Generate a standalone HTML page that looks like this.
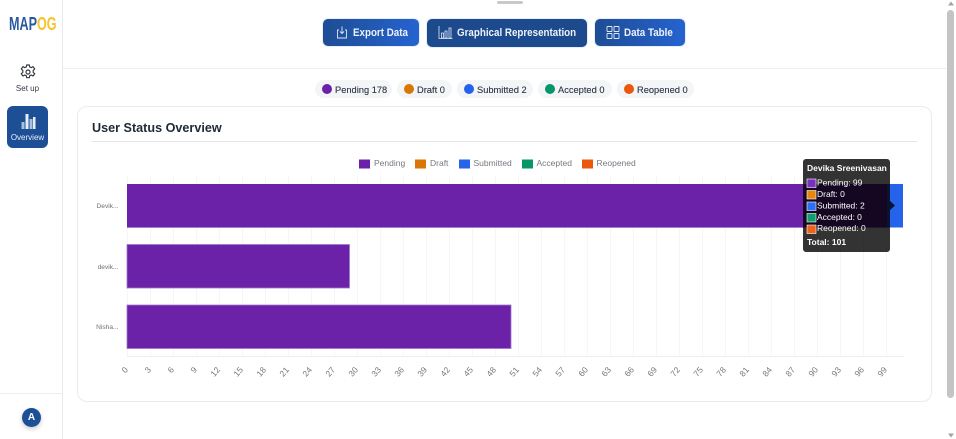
<!DOCTYPE html>
<html>
<head>
<meta charset="utf-8">
<style>
html,body{margin:0;padding:0;width:956px;height:439px;overflow:hidden;background:#fff;font-family:"Liberation Sans",sans-serif;color:#1f2430}
#root{position:absolute;left:0;top:0;width:956px;height:439px;filter:blur(.3px)}
.a{position:absolute}
.btn{position:absolute;top:19px;height:27px;border-radius:5px;color:#eef3fb;font-size:11px;font-weight:bold;line-height:27px;background:linear-gradient(90deg,#1e4d94,#2563d0);box-shadow:0 0 0 1px #e6eefa}
.btn span{position:absolute;top:1px;white-space:nowrap;transform:scaleX(.89);transform-origin:0 0}
.btn svg{position:absolute;top:6px}
.pill{position:absolute;top:80px;height:18px;border-radius:9px;background:#f4f5f6;font-size:9.3px;line-height:18px;color:#374151;white-space:nowrap}
.pill i{position:absolute;left:7px;top:4px;width:10px;height:10px;border-radius:50%}
.pill span{position:absolute;top:.5px;text-shadow:0 0 .3px #374151}
</style>
</head>
<body>
<div id="root">
<!-- sidebar -->
<div class="a" style="left:62px;top:0;width:1px;height:439px;background:#e8eaed"></div>
<div class="a" style="left:0;top:393px;width:62px;height:1px;background:#eceef0"></div>
<div class="a" style="left:9px;top:14px;font-size:18px;line-height:20px;font-weight:bold;transform:scaleX(.7);transform-origin:0 0;white-space:nowrap;width:80px"><span style="color:#2b5a9c">MAP</span><span style="color:#f6c52c">OG</span></div>
<svg class="a" style="left:20px;top:64px" width="16" height="16" viewBox="0 0 24 24" fill="none" stroke="#30343c" stroke-width="1.7" stroke-linejoin="round"><circle cx="12" cy="12" r="3"/><path d="M10 1.500h4l.6 3 2.300 1 2.600-1.600 2.600 3.500-2.300 2v3.200l2.300 2-2.600 3.500-2.600-1.600-2.300 1-.6 3h-4l-.6-3-2.300-1-2.600 1.600-2.600-3.500 2.300-2v-3.200l-2.300-2 2.600-3.500 2.600 1.600 2.300-1z"/></svg>
<div class="a" style="left:0;top:83.500px;width:55px;text-align:center;font-size:8px;line-height:10px;color:#333a45">Set up</div>
<div class="a" style="left:7px;top:106px;width:41px;height:42px;border-radius:6px;background:#1c4f96"></div>
<svg class="a" style="left:21px;top:113px" width="15" height="16" viewBox="0 0 15 16"><g fill="#a9bfdc"><rect x="0.500" y="9" width="3" height="7"/><rect x="8.500" y="6" width="3" height="10"/></g><g fill="#e6edf6"><rect x="4.500" y="1" width="3" height="15"/><rect x="12" y="4" width="2.500" height="12"/></g></svg>
<div class="a" style="left:7px;top:132.500px;width:41px;text-align:center;font-size:8px;line-height:10px;color:#e8eef7">Overview</div>
<div class="a" style="left:22px;top:408px;width:19px;height:19px;border-radius:50%;background:#1c4f96;box-shadow:0 2px 5px rgba(0,0,0,.22);color:#fff;font-size:10px;line-height:20px;text-align:center;font-weight:bold">A</div>

<!-- top -->
<div class="a" style="left:497px;top:1px;width:26px;height:3px;border-radius:2px;background:#c8c9cb"></div>
<div class="btn" style="left:323px;width:96px"><svg style="left:12px" width="14" height="15" viewBox="0 0 14 15" fill="none" stroke="#dfe8f5" stroke-width=".9"><path d="M4 5H2.500v8h9V5H10M7 1.500v7M5 6.500l2 2 2-2"/></svg><span style="left:30px">Export Data</span></div>
<div class="btn" style="left:427px;top:18.500px;height:28px;width:160px;background:#1c4a8c;line-height:28px"><svg style="left:11px" width="15" height="15" viewBox="0 0 15 15" fill="none" stroke="#dfe8f5" stroke-width=".8"><path d="M1 1v12.500h13.500M3.500 8h2v5h-2zM7 6h2v7H7zM11 3h2v10h-2z"/></svg><span style="left:30px;top:0">Graphical Representation</span></div>
<div class="btn" style="left:595px;width:90px"><svg style="left:11px" width="14" height="15" viewBox="0 0 14 15" fill="none" stroke="#dfe8f5" stroke-width=".9"><rect x="1" y="1.500" width="5" height="5" rx=".5"/><rect x="8" y="1.500" width="5" height="5" rx=".5"/><rect x="1" y="8.500" width="5" height="5" rx=".5"/><rect x="8" y="8.500" width="5" height="5" rx=".5"/></svg><span style="left:29px">Data Table</span></div>
<div class="a" style="left:63px;top:68px;width:883px;height:1px;background:#eceef0"></div>

<!-- pills -->
<div class="pill" style="left:315px;width:77px"><i style="background:#6b21a8"></i><span style="left:20px">Pending 178</span></div>
<div class="pill" style="left:397px;width:55px"><i style="background:#d97706"></i><span style="left:20px">Draft 0</span></div>
<div class="pill" style="left:457px;width:76px"><i style="background:#2563eb"></i><span style="left:20px">Submitted 2</span></div>
<div class="pill" style="left:538px;width:74px"><i style="background:#059669"></i><span style="left:20px">Accepted 0</span></div>
<div class="pill" style="left:617px;width:77px"><i style="background:#ea580c"></i><span style="left:20px">Reopened 0</span></div>

<!-- card -->
<div class="a" style="left:77px;top:106px;width:853px;height:294px;border:1px solid #e9ebee;border-radius:10px;background:#fff"></div>
<div class="a" style="left:92px;top:119px;font-size:13px;line-height:18px;font-weight:bold;color:#1f2937;transform:scaleX(.97);transform-origin:0 0;white-space:nowrap">User Status Overview</div>
<div class="a" style="left:92px;top:141px;width:825px;height:1px;background:#e3e5ea"></div>

<!-- chart -->
<svg class="a" style="left:0;top:0" width="956" height="439" viewBox="0 0 956 439" font-family="Liberation Sans, sans-serif">
<g stroke="#f6f6f7" stroke-width="1">
<path d="M127.500 175V356M150.500 175V356M173.500 175V356M196.500 175V356M219.500 175V356M242.500 175V356M265.500 175V356M288.500 175V356M311.500 175V356M334.500 175V356M357.500 175V356M380.500 175V356M403.500 175V356M426.500 175V356M449.500 175V356M472.500 175V356M495.500 175V356M518.500 175V356M541.500 175V356M564.500 175V356M587.500 175V356M610.500 175V356M633.500 175V356M656.500 175V356M679.500 175V356M702.500 175V356M725.500 175V356M748.500 175V356M771.500 175V356M794.500 175V356M817.500 175V356M840.500 175V356M863.500 175V356M886.500 175V356"/>
<path d="M127 356.500H904" stroke="#eeeef0"/>
</g>
<!-- legend -->
<g font-size="8.500" fill="#74787e">
<rect x="359" y="159.500" width="11" height="9" fill="#6b21a8"/><text x="374" y="166">Pending</text>
<rect x="415" y="159.500" width="11" height="9" fill="#d97706"/><text x="430" y="166">Draft</text>
<rect x="459" y="159.500" width="11" height="9" fill="#2563eb"/><text x="473.500" y="166">Submitted</text>
<rect x="522" y="159.500" width="11" height="9" fill="#059669"/><text x="536.500" y="166">Accepted</text>
<rect x="582" y="159.500" width="11" height="9" fill="#ea580c"/><text x="596.500" y="166">Reopened</text>
</g>
<!-- bars -->
<rect x="127" y="184" width="760" height="43.500" fill="#6b21a8"/>
<rect x="887" y="184" width="16" height="43.500" fill="#2563eb"/>
<rect x="127" y="244.500" width="222.500" height="43.500" fill="#6b21a8" stroke="#a27bc9" stroke-width=".8"/>
<rect x="127" y="305" width="384" height="43.500" fill="#6b21a8" stroke="#a27bc9" stroke-width=".8"/>
<g stroke="#a27bc9" stroke-width=".8"><path d="M127 227.500H887"/></g>
<!-- y labels -->
<g font-size="6.600" fill="#6b6f75" text-anchor="end">
<text x="118.500" y="208">Devik...</text>
<text x="118.500" y="269">devik...</text>
<text x="118.500" y="329">Nisha...</text>
</g>
<!-- x labels -->
<g font-size="8.500" fill="#75787e" text-anchor="end" transform="translate(.5,-2)">
<text transform="translate(128,372) rotate(-50)">0</text>
<text transform="translate(151,372) rotate(-50)">3</text>
<text transform="translate(174,372) rotate(-50)">6</text>
<text transform="translate(197,372) rotate(-50)">9</text>
<text transform="translate(220,372) rotate(-50)">12</text>
<text transform="translate(243,372) rotate(-50)">15</text>
<text transform="translate(266,372) rotate(-50)">18</text>
<text transform="translate(289,372) rotate(-50)">21</text>
<text transform="translate(312,372) rotate(-50)">24</text>
<text transform="translate(335,372) rotate(-50)">27</text>
<text transform="translate(358,372) rotate(-50)">30</text>
<text transform="translate(381,372) rotate(-50)">33</text>
<text transform="translate(404,372) rotate(-50)">36</text>
<text transform="translate(427,372) rotate(-50)">39</text>
<text transform="translate(450,372) rotate(-50)">42</text>
<text transform="translate(473,372) rotate(-50)">45</text>
<text transform="translate(496,372) rotate(-50)">48</text>
<text transform="translate(519,372) rotate(-50)">51</text>
<text transform="translate(542,372) rotate(-50)">54</text>
<text transform="translate(565,372) rotate(-50)">57</text>
<text transform="translate(588,372) rotate(-50)">60</text>
<text transform="translate(611,372) rotate(-50)">63</text>
<text transform="translate(634,372) rotate(-50)">66</text>
<text transform="translate(657,372) rotate(-50)">69</text>
<text transform="translate(680,372) rotate(-50)">72</text>
<text transform="translate(703,372) rotate(-50)">75</text>
<text transform="translate(726,372) rotate(-50)">78</text>
<text transform="translate(749,372) rotate(-50)">81</text>
<text transform="translate(772,372) rotate(-50)">84</text>
<text transform="translate(795,372) rotate(-50)">87</text>
<text transform="translate(818,372) rotate(-50)">90</text>
<text transform="translate(841,372) rotate(-50)">93</text>
<text transform="translate(864,372) rotate(-50)">96</text>
<text transform="translate(887,372) rotate(-50)">99</text>
</g>
<!-- tooltip -->
<path d="M806 159h81a3 3 0 0 1 3 3v39l5 4.500-5 4.500v39a3 3 0 0 1-3 3h-81a3 3 0 0 1-3-3v-87a3 3 0 0 1 3-3z" fill="#000" fill-opacity=".8"/>
<text x="807" y="171" font-size="8.500" font-weight="bold" fill="#fff">Devika Sreenivasan</text>
<g stroke="#fff" stroke-width=".6">
<rect x="807" y="179" width="9" height="8.500" fill="#7b2fc0"/>
<rect x="807" y="190.500" width="9" height="8.500" fill="#e8860e"/>
<rect x="807" y="202" width="9" height="8.500" fill="#2f6ef5"/>
<rect x="807" y="213.500" width="9" height="8.500" fill="#0e9f6e"/>
<rect x="807" y="225" width="9" height="8.500" fill="#f1621a"/>
</g>
<g font-size="8.500" fill="#fff">
<text x="817" y="185.500">Pending: 99</text>
<text x="817" y="197">Draft: 0</text>
<text x="817" y="208.500">Submitted: 2</text>
<text x="817" y="220">Accepted: 0</text>
<text x="817" y="231">Reopened: 0</text>
<text x="807" y="245" font-weight="bold">Total: 101</text>
</g>
</svg>

<!-- scrollbar -->
<div class="a" style="left:947px;top:10px;width:7px;height:388px;border-radius:4px;background:#c4c4c4"></div>
<svg class="a" style="left:947px;top:0" width="8" height="439"><path d="M4 1.500L7 5.500H1z" fill="#a3a3a3"/><path d="M1 433.500H7L4 437.500z" fill="#a3a3a3"/></svg>
</div>
</body>
</html>
